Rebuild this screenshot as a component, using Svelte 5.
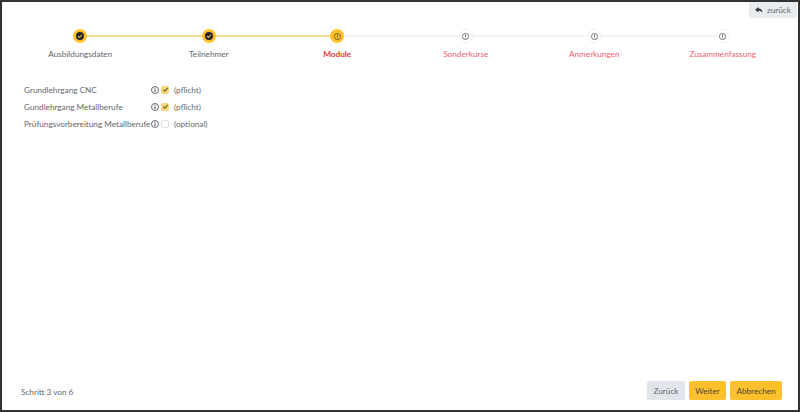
<script>
  const steps = [
    { label: 'Ausbildungsdaten', state: 'done' },
    { label: 'Teilnehmer', state: 'done' },
    { label: 'Module', state: 'current' },
    { label: 'Sonderkurse', state: 'todo' },
    { label: 'Anmerkungen', state: 'todo' },
    { label: 'Zusammenfassung', state: 'todo' }
  ];
  const modules = [
    { name: 'Grundlehrgang CNC', checked: true, kind: '(pflicht)' },
    { name: 'Gundlehrgang Metallberufe', checked: true, kind: '(pflicht)' },
    { name: 'Prüfungsvorbereitung Metallberufe', checked: false, kind: '(optional)' }
  ];
</script>

<div class="frame">
  <div class="toprow">
    <button class="back">
      <svg viewBox="0 0 16 16" width="8" height="8"><path d="M7 2 0 7.500 7 13V9.500c3.500 0 6 1 8 3.500 0-4.500-3-7.500-8-7.800z" fill="#343a40"/></svg>
      <span>zurück</span>
    </button>
  </div>

  <div class="steps">
    {#each steps as s, i}
      <div class="step {s.state}">
        {#if i > 0}<div class="line left"></div>{/if}
        {#if i < steps.length - 1}<div class="line right"></div>{/if}
        <div class="dot">
          {#if s.state === 'done'}
            <svg viewBox="0 0 16 16" width="8" height="8">
              <circle cx="8" cy="8" r="8" fill="#212529"/>
              <path d="M4 8.300 7 11l5-5.500" fill="none" stroke="#ffc02e" stroke-width="2.200"/>
            </svg>
          {:else}
            <svg viewBox="0 0 16 16" width="7" height="7">
              <circle cx="8" cy="8" r="7" fill="none" stroke="#343a40" stroke-width="1.500"/>
              <path d="M8 3.800v5M8 10.500v1.800" stroke="#343a40" stroke-width="1.800" fill="none"/>
            </svg>
          {/if}
        </div>
        <div class="label">{s.label}</div>
      </div>
    {/each}
  </div>

  <div class="modules">
    {#each modules as m}
      <div class="module">
        <span class="name">{m.name}</span>
        <svg class="info" viewBox="0 0 16 16" width="8" height="8">
          <circle cx="8" cy="8" r="7" fill="none" stroke="#343a40" stroke-width="1.500"/>
          <path d="M8 7v5M8 3.500v1.800" stroke="#343a40" stroke-width="2" fill="none"/>
        </svg>
        <span class="box" class:checked={m.checked}>
          {#if m.checked}
            <svg viewBox="0 0 16 16" width="7" height="7"><path d="M3 8.500 6.500 12 13 4.500" fill="none" stroke="#5c5235" stroke-width="2.400"/></svg>
          {/if}
        </span>
        <span class="kind">{m.kind}</span>
      </div>
    {/each}
  </div>

  <div class="footer">
    <span class="count">Schritt 3 von 6</span>
    <div class="buttons">
      <button class="btn grey">Zurück</button>
      <button class="btn yellow weiter">Weiter</button>
      <button class="btn yellow abbrechen">Abbrechen</button>
    </div>
  </div>
</div>

<style>
  :global(body) { margin: 0; background: #fff; }
  .frame {
    box-sizing: border-box;
    width: 800px;
    height: 412px;
    border: 2px solid #333;
    display: flex;
    flex-direction: column;
    font-family: Lato, "Open Sans", sans-serif;
    font-size: 8.200px;
    color: #62686e;
    background: #fff;
  }
  .toprow { display: flex; justify-content: flex-end; height: 16px; padding-right: 1px; }
  .back {
    border: 0;
    background: #e9ecef;
    width: 48px;
    height: 16px;
    border-radius: 0 0 2px 2px;
    display: flex;
    align-items: center;
    justify-content: center;
    gap: 4px;
    padding: 0;
    font: inherit;
    color: #62686e;
  }
  .steps {
    display: grid;
    grid-template-columns: repeat(6, 128.500px);
    margin: 11px 0 0 14px;
  }
  .step {
    position: relative;
    display: flex;
    flex-direction: column;
    align-items: center;
    gap: 5px;
  }
  .line {
    position: absolute;
    top: 6px;
    height: 2px;
    width: 50%;
    background: #f3f4f6;
  }
  .line.left { left: 0; }
  .line.right { right: 0; }
  .done .line, .current .line.left { background: #fbdc8e; }
  .dot {
    position: relative;
    box-sizing: border-box;
    width: 14px;
    height: 14px;
    border-radius: 50%;
    display: flex;
    align-items: center;
    justify-content: center;
    background: #fff;
    border: 1px solid #f1f2f4;
  }
  .done .dot, .current .dot { background: #ffc02e; border: 0; }
  .label { color: #f0626f; line-height: 13px; }
  .done .label { color: #62686e; }
  .current .label { color: #dc3545; font-weight: 700; }
  .modules {
    display: flex;
    flex-direction: column;
    gap: 4px;
    margin: 22px 0 0 22px;
  }
  .module { display: flex; align-items: center; height: 13px; }
  .name { width: 127px; white-space: nowrap; }
  .box {
    box-sizing: border-box;
    width: 8px;
    height: 8px;
    margin-left: 2px;
    border: 1px solid #dee2e6;
    border-radius: 2px;
    display: flex;
    align-items: center;
    justify-content: center;
    background: #fff;
  }
  .box.checked { background: #fbd877; border: 0; }
  .kind { margin-left: 5px; }
  .footer {
    margin-top: auto;
    display: flex;
    justify-content: space-between;
    align-items: center;
    padding: 0 16px 10px 19px;
  }
  .buttons { display: flex; gap: 4px; }
  .btn {
    border: 0;
    height: 19px;
    width: 38px;
    padding: 0;
    border-radius: 2px;
    font: inherit;
  }
  .weiter { width: 37px; }
  .abbrechen { width: 52px; }
  .grey { background: #e2e5ea; color: #62686e; }
  .yellow { background: #ffc02e; color: #4a4632; }
  .count { position: relative; top: 1px; }
</style>
